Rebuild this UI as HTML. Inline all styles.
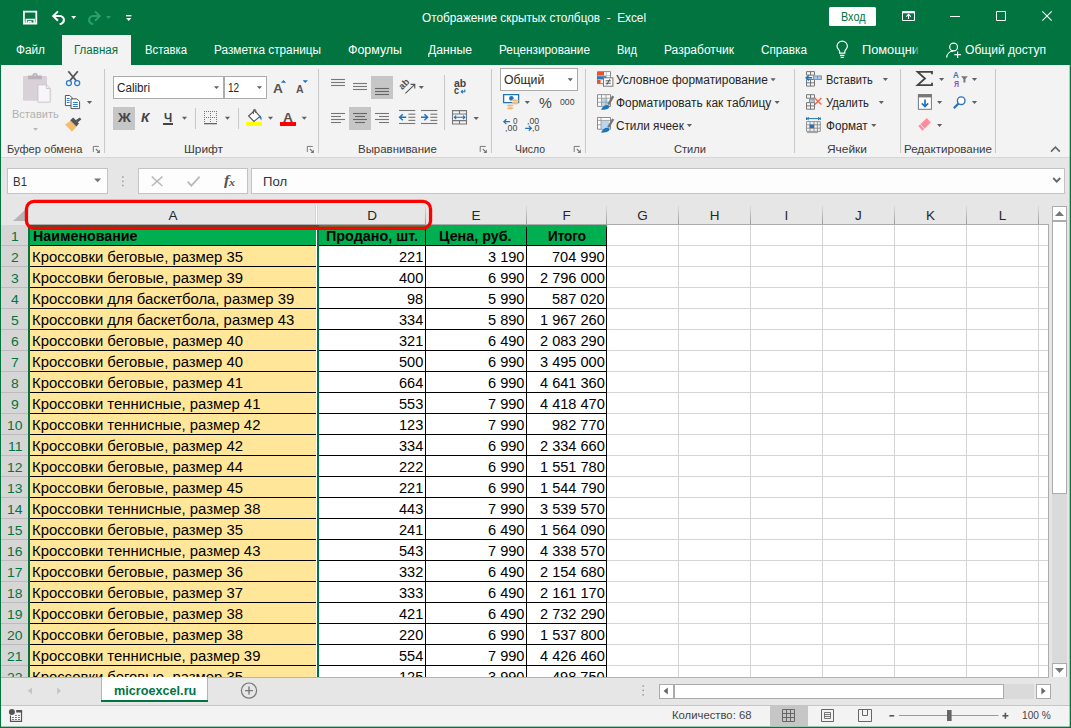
<!DOCTYPE html>
<html><head><meta charset="utf-8"><title>Excel</title>
<style>
html,body{margin:0;padding:0;}
body{width:1071px;height:728px;overflow:hidden;position:relative;background:#e6e6e6;font-family:"Liberation Sans",sans-serif;}
.r{position:absolute;box-sizing:border-box;display:block;}
.t{position:absolute;white-space:pre;line-height:1;transform-origin:0 50%;font-family:"Liberation Sans",sans-serif;}
</style></head><body>
<div class="r" style="left:0px;top:0px;width:1071px;height:65px;background:#01743f;"></div>
<div class="r" style="left:0px;top:65px;width:1071px;height:92px;background:#f3f3f3;"></div>
<div class="r" style="left:0px;top:157px;width:1071px;height:1px;background:#d6d6d6;"></div>
<div class="r" style="left:0px;top:158px;width:1071px;height:46px;background:#e6e6e6;"></div>
<div class="r" style="left:62px;top:35px;width:69px;height:30px;background:#f3f3f3;"></div>
<span class="t" style="left:422.00px;top:11px;line-height:14px;font-size:12px;color:#fff;transform:scaleX(0.9836);">Отображение скрытых столбцов  -  Excel</span>
<div class="r" style="left:829px;top:7px;width:47px;height:19px;background:#fff;border-radius:1.5px;"></div>
<span class="t" style="left:840.50px;top:10px;line-height:14px;font-size:12px;color:#01743f;transform:scaleX(0.9025);">Вход</span>
<span class="t" style="left:16.00px;top:43px;line-height:14px;font-size:12px;color:#fff;transform:scaleX(0.9830);">Файл</span>
<span class="t" style="left:145.00px;top:43px;line-height:14px;font-size:12px;color:#fff;transform:scaleX(0.9417);">Вставка</span>
<span class="t" style="left:214.00px;top:43px;line-height:14px;font-size:12px;color:#fff;transform:scaleX(0.9829);">Разметка страницы</span>
<span class="t" style="left:348.00px;top:43px;line-height:14px;font-size:12px;color:#fff;transform:scaleX(1.0341);">Формулы</span>
<span class="t" style="left:428.00px;top:43px;line-height:14px;font-size:12px;color:#fff;transform:scaleX(1.0149);">Данные</span>
<span class="t" style="left:499.00px;top:43px;line-height:14px;font-size:12px;color:#fff;transform:scaleX(0.9821);">Рецензирование</span>
<span class="t" style="left:617.00px;top:43px;line-height:14px;font-size:12px;color:#fff;transform:scaleX(0.9212);">Вид</span>
<span class="t" style="left:664.00px;top:43px;line-height:14px;font-size:12px;color:#fff;transform:scaleX(1.0003);">Разработчик</span>
<span class="t" style="left:761.00px;top:43px;line-height:14px;font-size:12px;color:#fff;transform:scaleX(0.9772);">Справка</span>
<span class="t" style="left:862.00px;top:43px;line-height:14px;font-size:12px;color:#fff;transform:scaleX(1.0669);">Помощни</span>
<span class="t" style="left:965.00px;top:43px;line-height:14px;font-size:12px;color:#fff;transform:scaleX(1.0047);">Общий доступ</span>
<span class="t" style="left:74.00px;top:43px;line-height:14px;font-size:12px;color:#01743f;transform:scaleX(0.9633);">Главная</span>
<div class="r" style="left:913px;top:42px;width:8px;height:16px;background:linear-gradient(90deg,rgba(1,116,63,0),#01743f 85%)"></div>
<svg class="r" style="left:0px;top:0px" width="140" height="34" viewBox="0 0 140 34">
<g fill="none" stroke="#fff" stroke-width="1.8">
<path d="M23.9 11.6H36.3V23.5H23.9Z"/>
<path d="M26.2 23.6V19.5H34.2V23.6" stroke-width="1.4"/>
<path d="M28.3 23.6V21.6H30.9V23.6" stroke-width="1.2"/>
</g>
<g fill="none" stroke="#fff" stroke-width="2" stroke-linecap="butt" stroke-linejoin="miter">
<path d="M58 11.4L53.2 16.1L58 20.8"/>
<path d="M53.6 16.1H61a4 4 0 0 1 0.3 7.6L59.6 24"/>
</g>
<path d="M71.2 16H76.2L73.7 19Z" fill="#fff"/>
<g fill="none" stroke="#27a070" stroke-width="2">
<path d="M95 11.4L99.8 16.1L95 20.8"/>
<path d="M99.4 16.1H92a4 4 0 0 0 -0.3 7.6L93.4 24"/>
</g>
<path d="M106 16H111L108.5 19Z" fill="#27a070"/>
<path d="M126 15H131.4V16.4H126Z" fill="#fff"/>
<path d="M126 18H131.4L128.7 21Z" fill="#fff"/>
</svg>
<svg class="r" style="left:895px;top:0px" width="170" height="34" viewBox="895 0 170 34">
<g fill="none" stroke="#fff" stroke-width="1">
<path d="M902.5 11.5H914.5V20.5H902.5Z"/>
<path d="M902.5 12.5H914.5" stroke-width="1.6"/>
<path d="M908.5 19V14.6M906.2 16.6L908.5 14.3L910.8 16.6" stroke-width="1.1"/>
<path d="M950 16.5H960"/>
<path d="M996.5 11.5H1005.5V20.5H996.5Z"/>
<path d="M1042.3 11.3L1051.7 20.7M1051.7 11.3L1042.3 20.7" stroke-width="1.1"/>
</g>
</svg>
<svg class="r" style="left:830px;top:36px" width="24" height="26" viewBox="830 36 24 26"><g fill="none" stroke="#fff" stroke-width="1.2">
<path d="M839.6 53.2V51.6C839.6 49.8 837 48.8 837 46.3a5.2 5.2 0 0 1 10.4 0C847.4 48.8 844.8 49.8 844.8 51.6V53.2Z"/>
<path d="M840 55.3H844.4M840.6 57.3H843.8"/>
</g></svg>
<svg class="r" style="left:940px;top:36px" width="26" height="26" viewBox="940 36 26 26"><g fill="none" stroke="#fff" stroke-width="1.2">
<circle cx="953.6" cy="47" r="3.9"/>
<path d="M946.6 57.6C947 53.4 950 51.2 953.2 51.2"/>
<path d="M957.6 51.4V58M954.3 54.7H960.9"/>
</g></svg>
<div class="r" style="left:104px;top:69px;width:1px;height:84px;background:#c8c8c8;"></div>
<div class="r" style="left:318px;top:69px;width:1px;height:84px;background:#c8c8c8;"></div>
<div class="r" style="left:491px;top:69px;width:1px;height:84px;background:#c8c8c8;"></div>
<div class="r" style="left:585px;top:69px;width:1px;height:84px;background:#c8c8c8;"></div>
<div class="r" style="left:794px;top:69px;width:1px;height:84px;background:#c8c8c8;"></div>
<div class="r" style="left:900px;top:69px;width:1px;height:84px;background:#c8c8c8;"></div>
<div class="r" style="left:995px;top:69px;width:1px;height:84px;background:#c8c8c8;"></div>
<div class="r" style="left:444px;top:75px;width:1px;height:55px;background:#c8c8c8;"></div>
<div class="r" style="left:195px;top:108px;width:1px;height:21px;background:#c8c8c8;"></div>
<div class="r" style="left:238px;top:108px;width:1px;height:21px;background:#c8c8c8;"></div>
<span class="t" style="left:6.80px;top:143px;line-height:12px;font-size:11.5px;color:#3b3b3b;transform:scaleX(0.9649);">Буфер обмена</span>
<span class="t" style="left:184.00px;top:143px;line-height:12px;font-size:11.5px;color:#3b3b3b;transform:scaleX(1.0308);">Шрифт</span>
<span class="t" style="left:357.60px;top:143px;line-height:12px;font-size:11.5px;color:#3b3b3b;transform:scaleX(0.9955);">Выравнивание</span>
<span class="t" style="left:514.90px;top:143px;line-height:12px;font-size:11.5px;color:#3b3b3b;transform:scaleX(0.9101);">Число</span>
<span class="t" style="left:674.00px;top:143px;line-height:12px;font-size:11.5px;color:#3b3b3b;transform:scaleX(0.9659);">Стили</span>
<span class="t" style="left:827.00px;top:143px;line-height:12px;font-size:11.5px;color:#3b3b3b;transform:scaleX(1.0370);">Ячейки</span>
<span class="t" style="left:904.00px;top:143px;line-height:12px;font-size:11.5px;color:#3b3b3b;transform:scaleX(1.0045);">Редактирование</span>
<div class="r" style="left:113px;top:107px;width:22px;height:23px;background:#c6c6c6;"></div>
<div class="r" style="left:371px;top:76px;width:22px;height:23px;background:#c6c6c6;"></div>
<div class="r" style="left:349px;top:107px;width:22px;height:23px;background:#c6c6c6;"></div>
<div class="r" style="left:113px;top:76px;width:111px;height:23px;background:#fff;border:1px solid #ababab;"></div>
<div class="r" style="left:224px;top:76px;width:43px;height:23px;background:#fff;border:1px solid #ababab;"></div>
<div class="r" style="left:500px;top:68px;width:78px;height:23px;background:#fff;border:1px solid #ababab;"></div>
<span class="t" style="left:116.60px;top:81px;line-height:14px;font-size:12px;color:#262626;transform:scaleX(0.9733);">Calibri</span>
<span class="t" style="left:228.00px;top:81px;line-height:14px;font-size:12px;color:#262626;transform:scaleX(0.8391);">12</span>
<span class="t" style="left:503.70px;top:73px;line-height:14px;font-size:12px;color:#262626;transform:scaleX(1.0181);">Общий</span>
<span class="t" style="left:11.90px;top:108px;line-height:12px;font-size:11.5px;color:#b1b1b1;transform:scaleX(0.9580);">Вставить</span>
<span class="t" style="left:117.90px;top:111px;line-height:14px;font-size:12.5px;color:#444;transform:scaleX(1.1330);font-weight:700;">Ж</span>
<span class="t" style="left:141.00px;top:111px;line-height:14px;font-size:12.5px;color:#444;transform:scaleX(1.0931);font-weight:700;font-style:italic;">К</span>
<span class="t" style="left:163.60px;top:111px;line-height:14px;font-size:12.5px;color:#444;transform:scaleX(0.9336);font-weight:700;">Ч</span>
<div class="r" style="left:163px;top:123px;width:10px;height:1.5px;background:#444;"></div>
<span class="t" style="left:273.30px;top:81px;line-height:15px;font-size:13.5px;color:#555;transform:scaleX(1.0154);font-weight:700;">A</span>
<span class="t" style="left:296.30px;top:83px;line-height:12px;font-size:10.5px;color:#555;transform:scaleX(1.0022);font-weight:700;">A</span>
<span class="t" style="left:283.40px;top:110px;line-height:15px;font-size:13px;color:#555;transform:scaleX(1.0545);font-weight:700;">A</span>
<div class="r" style="left:246px;top:122px;width:16px;height:4px;background:#ffff00;"></div>
<div class="r" style="left:280px;top:122px;width:16px;height:4px;background:#ff0000;"></div>
<span class="t" style="left:539.20px;top:95px;line-height:16px;font-size:14.5px;color:#444;transform:scaleX(0.9928);">%</span>
<span class="t" style="left:559.70px;top:96px;line-height:11px;font-size:9.7px;color:#444;transform:scaleX(0.8959);">000</span>
<span class="t" style="left:616.20px;top:73px;line-height:14px;font-size:12px;color:#262626;transform:scaleX(0.9943);">Условное форматирование</span>
<span class="t" style="left:616.20px;top:96px;line-height:14px;font-size:12px;color:#262626;transform:scaleX(0.9947);">Форматировать как таблицу</span>
<span class="t" style="left:616.20px;top:119px;line-height:14px;font-size:12px;color:#262626;transform:scaleX(0.9790);">Стили ячеек</span>
<span class="t" style="left:825.80px;top:73px;line-height:14px;font-size:12px;color:#262626;transform:scaleX(0.9181);">Вставить</span>
<span class="t" style="left:825.80px;top:96px;line-height:14px;font-size:12px;color:#262626;transform:scaleX(0.9364);">Удалить</span>
<span class="t" style="left:825.80px;top:119px;line-height:14px;font-size:12px;color:#262626;transform:scaleX(0.9759);">Формат</span>
<span class="t" style="left:453.70px;top:77px;line-height:12px;font-size:10.5px;color:#444;transform:scaleX(0.9956);font-weight:700;">ab</span>
<span class="t" style="left:454.00px;top:84px;line-height:12px;font-size:10.5px;color:#444;transform:scaleX(0.8562);font-weight:700;">c</span>
<span class="t" style="left:512.50px;top:116px;line-height:10px;font-size:8.8px;color:#444;transform:scaleX(0.9194);">0</span>
<span class="t" style="left:504.70px;top:123px;line-height:10px;font-size:8.8px;color:#444;transform:scaleX(1.0054);">,00</span>
<span class="t" style="left:527.10px;top:116px;line-height:10px;font-size:8.8px;color:#444;transform:scaleX(0.9891);">,00</span>
<span class="t" style="left:531.70px;top:123px;line-height:10px;font-size:8.8px;color:#444;transform:scaleX(1.0219);">,0</span>
<span class="t" style="left:953.20px;top:69.5px;line-height:10px;font-size:8.8px;color:#2e75b6;transform:scaleX(0.9126);font-weight:700;">A</span>
<span class="t" style="left:953.50px;top:78.5px;line-height:10px;font-size:8.4px;color:#9b4fb5;transform:scaleX(0.8282);font-weight:700;">Я</span>
<svg class="r" style="left:0;top:65px" width="1071" height="92" viewBox="0 65 1071 92"><path d="M86.9 101h5.2l-2.6 2.9z" fill="#606060"/><path d="M181.9 116.8h5.2l-2.6 2.9z" fill="#606060"/><path d="M213.9 86.2h5.2l-2.6 2.9z" fill="#606060"/><path d="M256.9 86.2h5.2l-2.6 2.9z" fill="#606060"/><path d="M224.9 116.8h5.2l-2.6 2.9z" fill="#606060"/><path d="M267.9 116.8h5.2l-2.6 2.9z" fill="#606060"/><path d="M301.7 116.8h5.2l-2.6 2.9z" fill="#606060"/><path d="M418.7 86h5.2l-2.6 2.9z" fill="#606060"/><path d="M473.6 117.1h5.2l-2.6 2.9z" fill="#606060"/><path d="M567.7 78.3h5.2l-2.6 2.9z" fill="#606060"/><path d="M524.7 101.1h5.2l-2.6 2.9z" fill="#606060"/><path d="M770.5 78.3h5.2l-2.6 2.9z" fill="#606060"/><path d="M774.5 101.1h5.2l-2.6 2.9z" fill="#606060"/><path d="M686.8 124h5.2l-2.6 2.9z" fill="#606060"/><path d="M882.8 78.1h5.2l-2.6 2.9z" fill="#606060"/><path d="M878.7 101.1h5.2l-2.6 2.9z" fill="#606060"/><path d="M871.2 124h5.2l-2.6 2.9z" fill="#606060"/><path d="M939 78.1h5.2l-2.6 2.9z" fill="#606060"/><path d="M971.9 78.1h5.2l-2.6 2.9z" fill="#606060"/><path d="M937 101.1h5.2l-2.6 2.9z" fill="#606060"/><path d="M971.9 101.1h5.2l-2.6 2.9z" fill="#606060"/><path d="M937 124h5.2l-2.6 2.9z" fill="#606060"/><path d="M33 128h5l-2.5 2.8z" fill="#b8b8b8"/><path d="M93.3 151.9V146.4H98.8" fill="none" stroke="#777" stroke-width="1"/><path d="M95.89999999999999 149.0L99.3 152.4" stroke="#777" stroke-width="1.1"/><path d="M96.5 153.0H99.89999999999999V149.6Z" fill="#777"/><path d="M307.3 151.9V146.4H312.8" fill="none" stroke="#777" stroke-width="1"/><path d="M309.90000000000003 149.0L313.3 152.4" stroke="#777" stroke-width="1.1"/><path d="M310.5 153.0H313.90000000000003V149.6Z" fill="#777"/><path d="M480.2 151.9V146.4H485.7" fill="none" stroke="#777" stroke-width="1"/><path d="M482.8 149.0L486.2 152.4" stroke="#777" stroke-width="1.1"/><path d="M483.4 153.0H486.8V149.6Z" fill="#777"/><path d="M574.2 151.9V146.4H579.7" fill="none" stroke="#777" stroke-width="1"/><path d="M576.8000000000001 149.0L580.2 152.4" stroke="#777" stroke-width="1.1"/><path d="M577.4000000000001 153.0H580.8000000000001V149.6Z" fill="#777"/><path d="M1051 151.6L1055.4 147.2L1059.8 151.6" fill="none" stroke="#666" stroke-width="1.6"/><rect x="23" y="76" width="24" height="24.7" rx="1" fill="#d8d2d8"/><path d="M28 79.3V75.6H32.4a2.7 2.7 0 0 1 5.4 0H41.8V79.3Z" fill="#b9b1b9"/><circle cx="35.1" cy="75.3" r="1" fill="#d8d2d8"/><path d="M37.9 84.8H46.6L50.2 88.4V102.2H37.9Z" fill="#f8f5f8" stroke="#cbc4cb" stroke-width="1"/><path d="M46.4 84.8V88.6H50.2" fill="none" stroke="#cbc4cb" stroke-width="1"/><path d="M68.3 71.2L76.4 81M77.8 71.2L69.7 81" stroke="#555" stroke-width="1.8" fill="none"/><circle cx="68.9" cy="83.1" r="2.5" fill="none" stroke="#2e7cc4" stroke-width="1.3"/><circle cx="77.2" cy="83.1" r="2.5" fill="none" stroke="#2e7cc4" stroke-width="1.3"/><path d="M65.4 95.5H69.8L72.2 97.9V105.6H65.4Z" fill="#fff" stroke="#555" stroke-width="1"/><path d="M71 98.9H76.8L79.6 101.7V108.6H71Z" fill="#fff" stroke="#555" stroke-width="1"/><path d="M66.8 98.5H69.6" stroke="#2e7cc4" stroke-width="1"/><path d="M66.8 100.5H69.6" stroke="#2e7cc4" stroke-width="1"/><path d="M66.8 102.5H69.6" stroke="#2e7cc4" stroke-width="1"/><path d="M72.8 102.5H77.8" stroke="#2e7cc4" stroke-width="1"/><path d="M72.8 104.5H77.8" stroke="#2e7cc4" stroke-width="1"/><path d="M72.8 106.5H77.8" stroke="#2e7cc4" stroke-width="1"/><path d="M65 124.6L71 120.6L76.6 126.4L72 131.8Z" fill="#f5bc6c"/><path d="M70.2 120.2L73.2 117.6L79 123.6L76.4 126.4Z" fill="#555"/><path d="M75.6 120.2L79.8 117.4L81.4 119.2L77.6 122.4Z" fill="#555"/><path d="M280.9 82.7L283.5 80L286.1 82.7Z" fill="#1e74bd"/><path d="M302.6 80.2H308L305.3 82.9Z" fill="#1e74bd"/><rect x="204" y="111" width="1" height="1" fill="#777"/><rect x="206" y="111" width="1" height="1" fill="#777"/><rect x="208" y="111" width="1" height="1" fill="#777"/><rect x="210" y="111" width="1" height="1" fill="#777"/><rect x="212" y="111" width="1" height="1" fill="#777"/><rect x="214" y="111" width="1" height="1" fill="#777"/><rect x="216" y="111" width="1" height="1" fill="#777"/><rect x="204" y="117" width="1" height="1" fill="#777"/><rect x="206" y="117" width="1" height="1" fill="#777"/><rect x="208" y="117" width="1" height="1" fill="#777"/><rect x="210" y="117" width="1" height="1" fill="#777"/><rect x="212" y="117" width="1" height="1" fill="#777"/><rect x="214" y="117" width="1" height="1" fill="#777"/><rect x="216" y="117" width="1" height="1" fill="#777"/><rect x="204" y="111" width="1" height="1" fill="#777"/><rect x="204" y="113" width="1" height="1" fill="#777"/><rect x="204" y="115" width="1" height="1" fill="#777"/><rect x="204" y="117" width="1" height="1" fill="#777"/><rect x="204" y="119" width="1" height="1" fill="#777"/><rect x="204" y="121" width="1" height="1" fill="#777"/><rect x="210" y="111" width="1" height="1" fill="#777"/><rect x="210" y="113" width="1" height="1" fill="#777"/><rect x="210" y="115" width="1" height="1" fill="#777"/><rect x="210" y="117" width="1" height="1" fill="#777"/><rect x="210" y="119" width="1" height="1" fill="#777"/><rect x="210" y="121" width="1" height="1" fill="#777"/><rect x="216" y="111" width="1" height="1" fill="#777"/><rect x="216" y="113" width="1" height="1" fill="#777"/><rect x="216" y="115" width="1" height="1" fill="#777"/><rect x="216" y="117" width="1" height="1" fill="#777"/><rect x="216" y="119" width="1" height="1" fill="#777"/><rect x="216" y="121" width="1" height="1" fill="#777"/><rect x="204" y="123" width="13" height="1.3" fill="#666"/><path d="M248.6 116L254.6 110.6L260 116.4L254 121.4Z" fill="#fff" stroke="#555" stroke-width="1.1"/><path d="M253.4 114V110.6a1.2 1.2 0 0 1 2.4 0V113" fill="none" stroke="#555" stroke-width="1"/><path d="M259.6 115C261.6 116.4 262.2 118.6 261.2 120.6C260.6 118.8 259.8 117.8 258.6 117Z" fill="#2e7cc4"/><path d="M331 79.5H345" stroke="#777" stroke-width="1.1"/><path d="M331 82.5H345" stroke="#777" stroke-width="1.1"/><path d="M331 85.5H345" stroke="#777" stroke-width="1.1"/><path d="M353 83.5H367" stroke="#777" stroke-width="1.1"/><path d="M353 86.5H367" stroke="#777" stroke-width="1.1"/><path d="M353 89.5H367" stroke="#777" stroke-width="1.1"/><path d="M375 88.5H389" stroke="#666" stroke-width="1.1"/><path d="M375 91.5H389" stroke="#666" stroke-width="1.1"/><path d="M375 94.5H389" stroke="#666" stroke-width="1.1"/><path d="M331 113.5H345" stroke="#777" stroke-width="1.1"/><path d="M353 113.5H367" stroke="#666" stroke-width="1.1"/><path d="M375 113.5H389" stroke="#777" stroke-width="1.1"/><path d="M331 116.5H341" stroke="#777" stroke-width="1.1"/><path d="M355 116.5H365" stroke="#666" stroke-width="1.1"/><path d="M379 116.5H389" stroke="#777" stroke-width="1.1"/><path d="M331 119.5H345" stroke="#777" stroke-width="1.1"/><path d="M353 119.5H367" stroke="#666" stroke-width="1.1"/><path d="M375 119.5H389" stroke="#777" stroke-width="1.1"/><path d="M331 122.5H341" stroke="#777" stroke-width="1.1"/><path d="M355 122.5H365" stroke="#666" stroke-width="1.1"/><path d="M379 122.5H389" stroke="#777" stroke-width="1.1"/><path d="M405.4 93.4L414.6 84.6M410.6 84.4H414.8V88.6" fill="none" stroke="#555" stroke-width="1.1"/><text x="0" y="0" transform="translate(402.2 90.2) rotate(-45)" font-family="Liberation Sans, sans-serif" font-size="9.5" font-weight="700" fill="#555">ab</text><path d="M399 110.5H415.3" stroke="#777" stroke-width="1.1"/><path d="M399 123.5H415.3" stroke="#777" stroke-width="1.1"/><path d="M408.4 114.2H415.3" stroke="#777" stroke-width="1.1"/><path d="M408.4 117.3H415.3" stroke="#777" stroke-width="1.1"/><path d="M408.4 120.4H415.3" stroke="#777" stroke-width="1.1"/><path d="M421 110.5H437.3" stroke="#777" stroke-width="1.1"/><path d="M421 123.5H437.3" stroke="#777" stroke-width="1.1"/><path d="M430.4 114.2H437.3" stroke="#777" stroke-width="1.1"/><path d="M430.4 117.3H437.3" stroke="#777" stroke-width="1.1"/><path d="M430.4 120.4H437.3" stroke="#777" stroke-width="1.1"/><path d="M406.2 117.3H399.8M402.8 114.3L399.6 117.3L402.8 120.3" fill="none" stroke="#1e74bd" stroke-width="1.5"/><path d="M421 117.3H427.4M424.4 114.3L427.6 117.3L424.4 120.3" fill="none" stroke="#1e74bd" stroke-width="1.5"/><path d="M464.8 89.6V91.8H461.4M462.8 90.2L461.2 91.8L462.8 93.4" fill="none" stroke="#1e74bd" stroke-width="1.1"/><path d="M452.5 110.6H466.5V124H452.5ZM452.5 114H466.5M452.5 120.6H466.5M459.5 110.6V114M459.5 120.6V124" fill="none" stroke="#777" stroke-width="1.1"/><path d="M454.4 117.3H464.8M456.2 115.6L454.3 117.3L456.2 119M463 115.6L464.9 117.3L463 119" fill="none" stroke="#1e74bd" stroke-width="1.1"/><path d="M503.6 94.6H518.6V102.6H503.6Z" fill="#fff" stroke="#1e74bd" stroke-width="1.3"/><circle cx="511.4" cy="98.4" r="2.3" fill="#1e74bd"/><ellipse cx="515.2" cy="100.6" rx="3.3" ry="1.3" fill="#f7b26b" stroke="#f3f3f3" stroke-width="0.5"/><ellipse cx="515.2" cy="103.2" rx="3.3" ry="1.3" fill="#f7b26b" stroke="#f3f3f3" stroke-width="0.5"/><ellipse cx="510.2" cy="105.6" rx="3.3" ry="1.3" fill="#f7b26b" stroke="#f3f3f3" stroke-width="0.5"/><ellipse cx="510.2" cy="108.2" rx="3.3" ry="1.3" fill="#f7b26b" stroke="#f3f3f3" stroke-width="0.5"/><path d="M510 121.7H503.8M506.4 119.3L503.8 121.7L506.4 124.1" fill="none" stroke="#1e74bd" stroke-width="1.2"/><path d="M525.2 128.3H531.4M528.8 125.9L531.4 128.3L528.8 130.7" fill="none" stroke="#1e74bd" stroke-width="1.2"/><path d="M597.5 71.6H610.5V83.6H597.5Z" fill="#fff" stroke="#8a8a8a" stroke-width="1"/><path d="M597.5 75.6H610.5M597.5 79.6H610.5M606.4 71.6V83.6" stroke="#b5b5b5" stroke-width="0.8" fill="none"/><rect x="597" y="72" width="7" height="3.4" fill="#f04e23"/><rect x="597" y="76.2" width="9" height="3" fill="#2e75b6"/><rect x="597" y="80" width="3.6" height="3.4" fill="#f04e23"/><rect x="603.5" y="77.8" width="9.4" height="8.4" fill="#fff" stroke="#777" stroke-width="1"/><path d="M605.6 80.8H610.8M605.6 83.2H610.8M609.8 79.2L606.8 84.8" stroke="#444" stroke-width="0.9" fill="none"/><path d="M597.5 94.7H610.5V106.4H597.5Z" fill="#fff" stroke="#8a8a8a" stroke-width="1"/><rect x="601" y="98.2" width="6.6" height="8" fill="#b9d7f0"/><path d="M597.5 98.2H610.5M597.5 102.2H610.5M601.5 94.7V106.2M606 94.7V106.2" stroke="#9a9a9a" stroke-width="0.9" fill="none"/><path d="M613.2 96.2L608.2 104.60000000000001" stroke="#777" stroke-width="2.4"/><path d="M601 109.8C603 105.2 607 103.8 609.4 105.8C610 108.60000000000001 606 110.2 601 109.8Z" fill="#1e74bd"/><path d="M597.5 117.5H610.5V129.2H597.5Z" fill="#fff" stroke="#8a8a8a" stroke-width="1"/><rect x="601" y="120.6" width="8" height="8.4" fill="#b9d7f0"/><path d="M597.5 120.4H610.5M601 117.5V129M597.5 124.8H601" stroke="#9a9a9a" stroke-width="0.9" fill="none"/><path d="M613.2 119L608.2 127.4" stroke="#777" stroke-width="2.4"/><path d="M601 132.6C603 128 607 126.6 609.4 128.6C610 131.4 606 133 601 132.6Z" fill="#1e74bd"/><path d="M806.5 71.6H814.5V75.1H806.5ZM810.5 71.6V75.1" fill="none" stroke="#777" stroke-width="1"/><path d="M806.5 79.5H814.5V86.1H806.5ZM806.5 82.8H814.5M810.5 79.5V86.1" fill="none" stroke="#777" stroke-width="1"/><rect x="813.6" y="75.9" width="7.8" height="3.6" fill="#a6cbec" stroke="#888" stroke-width="0.9"/><path d="M817.5 75.9V79.5" stroke="#888" stroke-width="0.8"/><path d="M812.2 77.8H806.4M809 75.2L806.2 77.8L809 80.4" fill="none" stroke="#1e74bd" stroke-width="1.5"/><path d="M806.5 94.7H814.5V98.2H806.5ZM810.5 94.7V98.2" fill="none" stroke="#777" stroke-width="1"/><path d="M806.5 102.60000000000001H814.5V109.2H806.5ZM806.5 105.9H814.5M810.5 102.60000000000001V109.2" fill="none" stroke="#777" stroke-width="1"/><rect x="809.6" y="99.2" width="4.6" height="3.4" fill="#a6cbec" stroke="#888" stroke-width="0.9"/><path d="M814.8 98L821.4 104.4M821.4 98L814.8 104.4" stroke="#f4664a" stroke-width="1.4" fill="none"/><path d="M806.5 117.3V120M820.3 117.3V120M807 118.6H820M808.8 117.2L807 118.6L808.8 120M818 117.2L819.8 118.6L818 120" fill="none" stroke="#1e74bd" stroke-width="1"/><path d="M806.5 121.6H820.3V131.4H806.5ZM806.5 124.8H820.3M806.5 128.2H820.3M810 121.6V131.4M814 121.6V131.4M817.4 121.6V131.4" fill="none" stroke="#8a8a8a" stroke-width="0.9"/><rect x="809.6" y="124.6" width="4.4" height="3.6" fill="#1e74bd"/><path d="M807 132.6H818" stroke="#8a8a8a" stroke-width="0.8"/><path d="M932 74.2V71.8H917.6L925 78.5L917.6 85.2H932V82.8" fill="none" stroke="#444" stroke-width="1.8"/><path d="M961.1 76.2H967.8L965.4 79V82.6H963.4V79Z" fill="#777"/><rect x="918.4" y="94.7" width="13" height="14.6" fill="#fff" stroke="#777" stroke-width="1"/><rect x="918" y="94.2" width="13.8" height="3.2" fill="#777"/><path d="M925 99.4V106.4M921.8 103.4L925 106.6L928.2 103.4" fill="none" stroke="#1e74bd" stroke-width="1.7"/><circle cx="961.2" cy="100.7" r="3.8" fill="#fff" stroke="#2e75b6" stroke-width="1.4"/><path d="M958.4 103.6L953.8 108.2" stroke="#2e75b6" stroke-width="2.2"/><path d="M918.3 126L926.8 117.9L930.8 122.6L922.4 130.7Z" fill="#ff8c9e"/><path d="M920.2 124.2L924.4 128.8" stroke="#f3f3f3" stroke-width="0.9"/></svg>
<div class="r" style="left:7px;top:168px;width:101px;height:26px;background:#fdfdfd;border:1px solid #c3c3c3;"></div>
<span class="t" style="left:13.00px;top:175px;line-height:14px;font-size:12px;color:#333;transform:scaleX(0.9538);">B1</span>
<div class="r" style="left:138px;top:168px;width:110px;height:26px;background:#fdfdfd;border:1px solid #c3c3c3;"></div>
<div class="r" style="left:251px;top:168px;width:814px;height:26px;background:#fdfdfd;border:1px solid #c3c3c3;"></div>
<span class="t" style="left:263.40px;top:175px;line-height:14px;font-size:12px;color:#333;transform:scaleX(1.0936);">Пол</span>
<svg class="r" style="left:0;top:160px" width="1071" height="44" viewBox="0 160 1071 44"><path d="M94 178.6H101.2L97.6 182.3Z" fill="#777"/><rect x="122" y="176.2" width="1.6" height="1.6" fill="#a3a3a3"/><rect x="122" y="180.5" width="1.6" height="1.6" fill="#a3a3a3"/><rect x="122" y="184.7" width="1.6" height="1.6" fill="#a3a3a3"/><path d="M151.8 176.6L162.4 186M162.4 176.6L151.8 186" stroke="#b9b9b9" stroke-width="1.5" fill="none"/><path d="M187.6 181.6L191.4 185.6L199.6 176.6" stroke="#b9b9b9" stroke-width="1.8" fill="none"/><path d="M1053.2 178L1056.7 181.6L1060.2 178" stroke="#666" stroke-width="1.8" fill="none"/></svg>
<span class="t" style="left:224.20px;top:172px;line-height:16px;font-size:15px;color:#555;transform:scaleX(1.0809);font-weight:700;font-style:italic;font-family:'Liberation Serif',serif;">f</span>
<span class="t" style="left:229.20px;top:177px;line-height:11px;font-size:10.5px;color:#555;transform:scaleX(1.1429);font-weight:700;font-style:italic;font-family:'Liberation Serif',serif;">x</span>
<div class="r" style="left:1px;top:204px;width:1048px;height:473px;background:#fff;"></div>
<div class="r" style="left:1px;top:204px;width:1048px;height:21px;background:#e6e6e6;"></div>
<div class="r" style="left:29px;top:224px;width:1020px;height:1px;background:#ababab;"></div>
<div class="r" style="left:1px;top:225px;width:27px;height:452px;background:#d6d6d6;"></div>
<div class="r" style="left:30px;top:225px;width:286px;height:21px;background:#00b050;"></div>
<div class="r" style="left:319px;top:225px;width:288px;height:21px;background:#00b050;"></div>
<div class="r" style="left:30px;top:246px;width:286px;height:431px;background:#ffe699;"></div>
<div class="r" style="left:678px;top:225px;width:1px;height:452px;background:#d4d4d4;"></div>
<div class="r" style="left:750px;top:225px;width:1px;height:452px;background:#d4d4d4;"></div>
<div class="r" style="left:822px;top:225px;width:1px;height:452px;background:#d4d4d4;"></div>
<div class="r" style="left:894px;top:225px;width:1px;height:452px;background:#d4d4d4;"></div>
<div class="r" style="left:966px;top:225px;width:1px;height:452px;background:#d4d4d4;"></div>
<div class="r" style="left:1038px;top:225px;width:1px;height:452px;background:#d4d4d4;"></div>
<div class="r" style="left:607px;top:245px;width:441px;height:1px;background:#d4d4d4;"></div>
<div class="r" style="left:30px;top:245px;width:577px;height:1px;background:#000;"></div>
<div class="r" style="left:1px;top:245px;width:27px;height:1px;background:#bcbcbc;"></div>
<div class="r" style="left:607px;top:266px;width:441px;height:1px;background:#d4d4d4;"></div>
<div class="r" style="left:30px;top:266px;width:577px;height:1px;background:#000;"></div>
<div class="r" style="left:1px;top:266px;width:27px;height:1px;background:#bcbcbc;"></div>
<div class="r" style="left:607px;top:287px;width:441px;height:1px;background:#d4d4d4;"></div>
<div class="r" style="left:30px;top:287px;width:577px;height:1px;background:#000;"></div>
<div class="r" style="left:1px;top:287px;width:27px;height:1px;background:#bcbcbc;"></div>
<div class="r" style="left:607px;top:308px;width:441px;height:1px;background:#d4d4d4;"></div>
<div class="r" style="left:30px;top:308px;width:577px;height:1px;background:#000;"></div>
<div class="r" style="left:1px;top:308px;width:27px;height:1px;background:#bcbcbc;"></div>
<div class="r" style="left:607px;top:329px;width:441px;height:1px;background:#d4d4d4;"></div>
<div class="r" style="left:30px;top:329px;width:577px;height:1px;background:#000;"></div>
<div class="r" style="left:1px;top:329px;width:27px;height:1px;background:#bcbcbc;"></div>
<div class="r" style="left:607px;top:350px;width:441px;height:1px;background:#d4d4d4;"></div>
<div class="r" style="left:30px;top:350px;width:577px;height:1px;background:#000;"></div>
<div class="r" style="left:1px;top:350px;width:27px;height:1px;background:#bcbcbc;"></div>
<div class="r" style="left:607px;top:371px;width:441px;height:1px;background:#d4d4d4;"></div>
<div class="r" style="left:30px;top:371px;width:577px;height:1px;background:#000;"></div>
<div class="r" style="left:1px;top:371px;width:27px;height:1px;background:#bcbcbc;"></div>
<div class="r" style="left:607px;top:392px;width:441px;height:1px;background:#d4d4d4;"></div>
<div class="r" style="left:30px;top:392px;width:577px;height:1px;background:#000;"></div>
<div class="r" style="left:1px;top:392px;width:27px;height:1px;background:#bcbcbc;"></div>
<div class="r" style="left:607px;top:413px;width:441px;height:1px;background:#d4d4d4;"></div>
<div class="r" style="left:30px;top:413px;width:577px;height:1px;background:#000;"></div>
<div class="r" style="left:1px;top:413px;width:27px;height:1px;background:#bcbcbc;"></div>
<div class="r" style="left:607px;top:434px;width:441px;height:1px;background:#d4d4d4;"></div>
<div class="r" style="left:30px;top:434px;width:577px;height:1px;background:#000;"></div>
<div class="r" style="left:1px;top:434px;width:27px;height:1px;background:#bcbcbc;"></div>
<div class="r" style="left:607px;top:455px;width:441px;height:1px;background:#d4d4d4;"></div>
<div class="r" style="left:30px;top:455px;width:577px;height:1px;background:#000;"></div>
<div class="r" style="left:1px;top:455px;width:27px;height:1px;background:#bcbcbc;"></div>
<div class="r" style="left:607px;top:476px;width:441px;height:1px;background:#d4d4d4;"></div>
<div class="r" style="left:30px;top:476px;width:577px;height:1px;background:#000;"></div>
<div class="r" style="left:1px;top:476px;width:27px;height:1px;background:#bcbcbc;"></div>
<div class="r" style="left:607px;top:497px;width:441px;height:1px;background:#d4d4d4;"></div>
<div class="r" style="left:30px;top:497px;width:577px;height:1px;background:#000;"></div>
<div class="r" style="left:1px;top:497px;width:27px;height:1px;background:#bcbcbc;"></div>
<div class="r" style="left:607px;top:518px;width:441px;height:1px;background:#d4d4d4;"></div>
<div class="r" style="left:30px;top:518px;width:577px;height:1px;background:#000;"></div>
<div class="r" style="left:1px;top:518px;width:27px;height:1px;background:#bcbcbc;"></div>
<div class="r" style="left:607px;top:539px;width:441px;height:1px;background:#d4d4d4;"></div>
<div class="r" style="left:30px;top:539px;width:577px;height:1px;background:#000;"></div>
<div class="r" style="left:1px;top:539px;width:27px;height:1px;background:#bcbcbc;"></div>
<div class="r" style="left:607px;top:560px;width:441px;height:1px;background:#d4d4d4;"></div>
<div class="r" style="left:30px;top:560px;width:577px;height:1px;background:#000;"></div>
<div class="r" style="left:1px;top:560px;width:27px;height:1px;background:#bcbcbc;"></div>
<div class="r" style="left:607px;top:581px;width:441px;height:1px;background:#d4d4d4;"></div>
<div class="r" style="left:30px;top:581px;width:577px;height:1px;background:#000;"></div>
<div class="r" style="left:1px;top:581px;width:27px;height:1px;background:#bcbcbc;"></div>
<div class="r" style="left:607px;top:602px;width:441px;height:1px;background:#d4d4d4;"></div>
<div class="r" style="left:30px;top:602px;width:577px;height:1px;background:#000;"></div>
<div class="r" style="left:1px;top:602px;width:27px;height:1px;background:#bcbcbc;"></div>
<div class="r" style="left:607px;top:623px;width:441px;height:1px;background:#d4d4d4;"></div>
<div class="r" style="left:30px;top:623px;width:577px;height:1px;background:#000;"></div>
<div class="r" style="left:1px;top:623px;width:27px;height:1px;background:#bcbcbc;"></div>
<div class="r" style="left:607px;top:644px;width:441px;height:1px;background:#d4d4d4;"></div>
<div class="r" style="left:30px;top:644px;width:577px;height:1px;background:#000;"></div>
<div class="r" style="left:1px;top:644px;width:27px;height:1px;background:#bcbcbc;"></div>
<div class="r" style="left:607px;top:665px;width:441px;height:1px;background:#d4d4d4;"></div>
<div class="r" style="left:30px;top:665px;width:577px;height:1px;background:#000;"></div>
<div class="r" style="left:1px;top:665px;width:27px;height:1px;background:#bcbcbc;"></div>
<div class="r" style="left:425px;top:227px;width:1px;height:450px;background:#000;"></div>
<div class="r" style="left:526px;top:227px;width:1px;height:450px;background:#000;"></div>
<div class="r" style="left:606px;top:227px;width:1px;height:450px;background:#000;"></div>
<div class="r" style="left:28px;top:225px;width:2px;height:452px;background:#01743f;"></div>
<div class="r" style="left:316px;top:225px;width:1px;height:452px;background:#fff;"></div>
<div class="r" style="left:317px;top:225px;width:2px;height:452px;background:#01743f;"></div>
<div class="r" style="left:28px;top:225px;width:291px;height:2px;background:#01743f;"></div>
<div class="r" style="left:1048px;top:224px;width:1px;height:454px;background:#ababab;"></div>
<div class="r" style="left:425px;top:205px;width:1px;height:19px;background:linear-gradient(#e0e0e0,#9a9a9a)"></div>
<div class="r" style="left:526px;top:205px;width:1px;height:19px;background:linear-gradient(#e0e0e0,#9a9a9a)"></div>
<div class="r" style="left:606px;top:205px;width:1px;height:19px;background:linear-gradient(#e0e0e0,#9a9a9a)"></div>
<div class="r" style="left:678px;top:205px;width:1px;height:19px;background:linear-gradient(#e0e0e0,#9a9a9a)"></div>
<div class="r" style="left:750px;top:205px;width:1px;height:19px;background:linear-gradient(#e0e0e0,#9a9a9a)"></div>
<div class="r" style="left:822px;top:205px;width:1px;height:19px;background:linear-gradient(#e0e0e0,#9a9a9a)"></div>
<div class="r" style="left:894px;top:205px;width:1px;height:19px;background:linear-gradient(#e0e0e0,#9a9a9a)"></div>
<div class="r" style="left:966px;top:205px;width:1px;height:19px;background:linear-gradient(#e0e0e0,#9a9a9a)"></div>
<div class="r" style="left:1038px;top:205px;width:1px;height:19px;background:linear-gradient(#e0e0e0,#9a9a9a)"></div>
<div class="r" style="left:315px;top:205px;width:3px;height:19px;background:linear-gradient(90deg,#bdbdbd,#fff 45%,#fff 55%,#bdbdbd)"></div>
<svg class="r" style="left:13px;top:210px" width="12" height="11" viewBox="0 0 12 11"><path d="M12 0V11H0Z" fill="#b4b4b4"/></svg>
<span class="t" style="left:168.50px;top:207.5px;line-height:15px;font-size:13.5px;color:#262626;transform:scaleX(1.0000);">A</span>
<span class="t" style="left:367.13px;top:207.5px;line-height:15px;font-size:13.5px;color:#262626;transform:scaleX(1.0000);">D</span>
<span class="t" style="left:471.50px;top:207.5px;line-height:15px;font-size:13.5px;color:#262626;transform:scaleX(1.0000);">E</span>
<span class="t" style="left:562.38px;top:207.5px;line-height:15px;font-size:13.5px;color:#262626;transform:scaleX(1.0000);">F</span>
<span class="t" style="left:637.25px;top:207.5px;line-height:15px;font-size:13.5px;color:#262626;transform:scaleX(1.0000);">G</span>
<span class="t" style="left:709.63px;top:207.5px;line-height:15px;font-size:13.5px;color:#262626;transform:scaleX(1.0000);">H</span>
<span class="t" style="left:784.62px;top:207.5px;line-height:15px;font-size:13.5px;color:#262626;transform:scaleX(1.0000);">I</span>
<span class="t" style="left:855.12px;top:207.5px;line-height:15px;font-size:13.5px;color:#262626;transform:scaleX(1.0000);">J</span>
<span class="t" style="left:926.00px;top:207.5px;line-height:15px;font-size:13.5px;color:#262626;transform:scaleX(1.0000);">K</span>
<span class="t" style="left:998.75px;top:207.5px;line-height:15px;font-size:13.5px;color:#262626;transform:scaleX(1.0000);">L</span>
<div class="r" style="left:0px;top:204px;width:28px;height:473px;overflow:hidden">
<span class="t" style="left:11.13px;top:25px;line-height:15px;font-size:13.5px;color:#01743f;transform:scaleX(1.0300);">1</span>
<span class="t" style="left:11.13px;top:46px;line-height:15px;font-size:13.5px;color:#01743f;transform:scaleX(1.0300);">2</span>
<span class="t" style="left:11.13px;top:67px;line-height:15px;font-size:13.5px;color:#01743f;transform:scaleX(1.0300);">3</span>
<span class="t" style="left:11.13px;top:88px;line-height:15px;font-size:13.5px;color:#01743f;transform:scaleX(1.0300);">4</span>
<span class="t" style="left:11.13px;top:109px;line-height:15px;font-size:13.5px;color:#01743f;transform:scaleX(1.0300);">5</span>
<span class="t" style="left:11.13px;top:130px;line-height:15px;font-size:13.5px;color:#01743f;transform:scaleX(1.0300);">6</span>
<span class="t" style="left:11.13px;top:151px;line-height:15px;font-size:13.5px;color:#01743f;transform:scaleX(1.0300);">7</span>
<span class="t" style="left:11.13px;top:172px;line-height:15px;font-size:13.5px;color:#01743f;transform:scaleX(1.0300);">8</span>
<span class="t" style="left:11.13px;top:193px;line-height:15px;font-size:13.5px;color:#01743f;transform:scaleX(1.0300);">9</span>
<span class="t" style="left:7.27px;top:214px;line-height:15px;font-size:13.5px;color:#01743f;transform:scaleX(1.0300);">10</span>
<span class="t" style="left:7.78px;top:235px;line-height:15px;font-size:13.5px;color:#01743f;transform:scaleX(1.0300);">11</span>
<span class="t" style="left:7.27px;top:256px;line-height:15px;font-size:13.5px;color:#01743f;transform:scaleX(1.0300);">12</span>
<span class="t" style="left:7.27px;top:277px;line-height:15px;font-size:13.5px;color:#01743f;transform:scaleX(1.0300);">13</span>
<span class="t" style="left:7.27px;top:298px;line-height:15px;font-size:13.5px;color:#01743f;transform:scaleX(1.0300);">14</span>
<span class="t" style="left:7.27px;top:319px;line-height:15px;font-size:13.5px;color:#01743f;transform:scaleX(1.0300);">15</span>
<span class="t" style="left:7.27px;top:340px;line-height:15px;font-size:13.5px;color:#01743f;transform:scaleX(1.0300);">16</span>
<span class="t" style="left:7.27px;top:361px;line-height:15px;font-size:13.5px;color:#01743f;transform:scaleX(1.0300);">17</span>
<span class="t" style="left:7.27px;top:382px;line-height:15px;font-size:13.5px;color:#01743f;transform:scaleX(1.0300);">18</span>
<span class="t" style="left:7.27px;top:403px;line-height:15px;font-size:13.5px;color:#01743f;transform:scaleX(1.0300);">19</span>
<span class="t" style="left:7.27px;top:424px;line-height:15px;font-size:13.5px;color:#01743f;transform:scaleX(1.0300);">20</span>
<span class="t" style="left:7.27px;top:445px;line-height:15px;font-size:13.5px;color:#01743f;transform:scaleX(1.0300);">21</span>
<span class="t" style="left:7.27px;top:466px;line-height:15px;font-size:13.5px;color:#01743f;transform:scaleX(1.0300);">22</span>
</div>
<span class="t" style="left:32.50px;top:228px;line-height:16px;font-size:14px;color:#000;transform:scaleX(1.0174);font-weight:700;">Наименование</span>
<span class="t" style="left:325.50px;top:228px;line-height:16px;font-size:14px;color:#000;transform:scaleX(1.0265);font-weight:700;">Продано, шт.</span>
<span class="t" style="left:439.00px;top:228px;line-height:16px;font-size:14px;color:#000;transform:scaleX(1.0226);font-weight:700;">Цена, руб.</span>
<span class="t" style="left:548.00px;top:228px;line-height:16px;font-size:14px;color:#000;transform:scaleX(0.9624);font-weight:700;">Итого</span>
<div class="r" style="left:1px;top:204px;width:1048px;height:473px;overflow:hidden">
<span class="t" style="left:31.00px;top:45px;line-height:16px;font-size:14px;color:#000;transform:scaleX(1.0617);">Кроссовки беговые, размер 35</span>
<span class="t" style="left:398.21px;top:45px;line-height:16px;font-size:14px;color:#000;transform:scaleX(1.0400);">221</span>
<span class="t" style="left:487.06px;top:45px;line-height:16px;font-size:14px;color:#000;transform:scaleX(1.0400);">3 190</span>
<span class="t" style="left:550.87px;top:45px;line-height:16px;font-size:14px;color:#000;transform:scaleX(1.0400);">704 990</span>
<span class="t" style="left:31.00px;top:66px;line-height:16px;font-size:14px;color:#000;transform:scaleX(1.0617);">Кроссовки беговые, размер 39</span>
<span class="t" style="left:398.21px;top:66px;line-height:16px;font-size:14px;color:#000;transform:scaleX(1.0400);">400</span>
<span class="t" style="left:487.06px;top:66px;line-height:16px;font-size:14px;color:#000;transform:scaleX(1.0400);">6 990</span>
<span class="t" style="left:538.73px;top:66px;line-height:16px;font-size:14px;color:#000;transform:scaleX(1.0400);">2 796 000</span>
<span class="t" style="left:31.00px;top:87px;line-height:16px;font-size:14px;color:#000;transform:scaleX(1.0617);">Кроссовки для баскетбола, размер 39</span>
<span class="t" style="left:406.30px;top:87px;line-height:16px;font-size:14px;color:#000;transform:scaleX(1.0400);">98</span>
<span class="t" style="left:487.06px;top:87px;line-height:16px;font-size:14px;color:#000;transform:scaleX(1.0400);">5 990</span>
<span class="t" style="left:550.87px;top:87px;line-height:16px;font-size:14px;color:#000;transform:scaleX(1.0400);">587 020</span>
<span class="t" style="left:31.00px;top:108px;line-height:16px;font-size:14px;color:#000;transform:scaleX(1.0617);">Кроссовки для баскетбола, размер 43</span>
<span class="t" style="left:398.21px;top:108px;line-height:16px;font-size:14px;color:#000;transform:scaleX(1.0400);">334</span>
<span class="t" style="left:487.06px;top:108px;line-height:16px;font-size:14px;color:#000;transform:scaleX(1.0400);">5 890</span>
<span class="t" style="left:538.73px;top:108px;line-height:16px;font-size:14px;color:#000;transform:scaleX(1.0400);">1 967 260</span>
<span class="t" style="left:31.00px;top:129px;line-height:16px;font-size:14px;color:#000;transform:scaleX(1.0617);">Кроссовки беговые, размер 40</span>
<span class="t" style="left:398.21px;top:129px;line-height:16px;font-size:14px;color:#000;transform:scaleX(1.0400);">321</span>
<span class="t" style="left:487.06px;top:129px;line-height:16px;font-size:14px;color:#000;transform:scaleX(1.0400);">6 490</span>
<span class="t" style="left:538.73px;top:129px;line-height:16px;font-size:14px;color:#000;transform:scaleX(1.0400);">2 083 290</span>
<span class="t" style="left:31.00px;top:150px;line-height:16px;font-size:14px;color:#000;transform:scaleX(1.0617);">Кроссовки беговые, размер 40</span>
<span class="t" style="left:398.21px;top:150px;line-height:16px;font-size:14px;color:#000;transform:scaleX(1.0400);">500</span>
<span class="t" style="left:487.06px;top:150px;line-height:16px;font-size:14px;color:#000;transform:scaleX(1.0400);">6 990</span>
<span class="t" style="left:538.73px;top:150px;line-height:16px;font-size:14px;color:#000;transform:scaleX(1.0400);">3 495 000</span>
<span class="t" style="left:31.00px;top:171px;line-height:16px;font-size:14px;color:#000;transform:scaleX(1.0617);">Кроссовки беговые, размер 41</span>
<span class="t" style="left:398.21px;top:171px;line-height:16px;font-size:14px;color:#000;transform:scaleX(1.0400);">664</span>
<span class="t" style="left:487.06px;top:171px;line-height:16px;font-size:14px;color:#000;transform:scaleX(1.0400);">6 990</span>
<span class="t" style="left:538.73px;top:171px;line-height:16px;font-size:14px;color:#000;transform:scaleX(1.0400);">4 641 360</span>
<span class="t" style="left:31.00px;top:192px;line-height:16px;font-size:14px;color:#000;transform:scaleX(1.0617);">Кроссовки теннисные, размер 41</span>
<span class="t" style="left:398.21px;top:192px;line-height:16px;font-size:14px;color:#000;transform:scaleX(1.0400);">553</span>
<span class="t" style="left:487.06px;top:192px;line-height:16px;font-size:14px;color:#000;transform:scaleX(1.0400);">7 990</span>
<span class="t" style="left:538.73px;top:192px;line-height:16px;font-size:14px;color:#000;transform:scaleX(1.0400);">4 418 470</span>
<span class="t" style="left:31.00px;top:213px;line-height:16px;font-size:14px;color:#000;transform:scaleX(1.0617);">Кроссовки теннисные, размер 42</span>
<span class="t" style="left:398.21px;top:213px;line-height:16px;font-size:14px;color:#000;transform:scaleX(1.0400);">123</span>
<span class="t" style="left:487.06px;top:213px;line-height:16px;font-size:14px;color:#000;transform:scaleX(1.0400);">7 990</span>
<span class="t" style="left:550.87px;top:213px;line-height:16px;font-size:14px;color:#000;transform:scaleX(1.0400);">982 770</span>
<span class="t" style="left:31.00px;top:234px;line-height:16px;font-size:14px;color:#000;transform:scaleX(1.0617);">Кроссовки беговые, размер 42</span>
<span class="t" style="left:398.21px;top:234px;line-height:16px;font-size:14px;color:#000;transform:scaleX(1.0400);">334</span>
<span class="t" style="left:487.06px;top:234px;line-height:16px;font-size:14px;color:#000;transform:scaleX(1.0400);">6 990</span>
<span class="t" style="left:538.73px;top:234px;line-height:16px;font-size:14px;color:#000;transform:scaleX(1.0400);">2 334 660</span>
<span class="t" style="left:31.00px;top:255px;line-height:16px;font-size:14px;color:#000;transform:scaleX(1.0617);">Кроссовки беговые, размер 44</span>
<span class="t" style="left:398.21px;top:255px;line-height:16px;font-size:14px;color:#000;transform:scaleX(1.0400);">222</span>
<span class="t" style="left:487.06px;top:255px;line-height:16px;font-size:14px;color:#000;transform:scaleX(1.0400);">6 990</span>
<span class="t" style="left:538.73px;top:255px;line-height:16px;font-size:14px;color:#000;transform:scaleX(1.0400);">1 551 780</span>
<span class="t" style="left:31.00px;top:276px;line-height:16px;font-size:14px;color:#000;transform:scaleX(1.0617);">Кроссовки беговые, размер 45</span>
<span class="t" style="left:398.21px;top:276px;line-height:16px;font-size:14px;color:#000;transform:scaleX(1.0400);">221</span>
<span class="t" style="left:487.06px;top:276px;line-height:16px;font-size:14px;color:#000;transform:scaleX(1.0400);">6 990</span>
<span class="t" style="left:538.73px;top:276px;line-height:16px;font-size:14px;color:#000;transform:scaleX(1.0400);">1 544 790</span>
<span class="t" style="left:31.00px;top:297px;line-height:16px;font-size:14px;color:#000;transform:scaleX(1.0617);">Кроссовки теннисные, размер 38</span>
<span class="t" style="left:398.21px;top:297px;line-height:16px;font-size:14px;color:#000;transform:scaleX(1.0400);">443</span>
<span class="t" style="left:487.06px;top:297px;line-height:16px;font-size:14px;color:#000;transform:scaleX(1.0400);">7 990</span>
<span class="t" style="left:538.73px;top:297px;line-height:16px;font-size:14px;color:#000;transform:scaleX(1.0400);">3 539 570</span>
<span class="t" style="left:31.00px;top:318px;line-height:16px;font-size:14px;color:#000;transform:scaleX(1.0617);">Кроссовки беговые, размер 35</span>
<span class="t" style="left:398.21px;top:318px;line-height:16px;font-size:14px;color:#000;transform:scaleX(1.0400);">241</span>
<span class="t" style="left:487.06px;top:318px;line-height:16px;font-size:14px;color:#000;transform:scaleX(1.0400);">6 490</span>
<span class="t" style="left:538.73px;top:318px;line-height:16px;font-size:14px;color:#000;transform:scaleX(1.0400);">1 564 090</span>
<span class="t" style="left:31.00px;top:339px;line-height:16px;font-size:14px;color:#000;transform:scaleX(1.0617);">Кроссовки теннисные, размер 43</span>
<span class="t" style="left:398.21px;top:339px;line-height:16px;font-size:14px;color:#000;transform:scaleX(1.0400);">543</span>
<span class="t" style="left:487.06px;top:339px;line-height:16px;font-size:14px;color:#000;transform:scaleX(1.0400);">7 990</span>
<span class="t" style="left:538.73px;top:339px;line-height:16px;font-size:14px;color:#000;transform:scaleX(1.0400);">4 338 570</span>
<span class="t" style="left:31.00px;top:360px;line-height:16px;font-size:14px;color:#000;transform:scaleX(1.0617);">Кроссовки беговые, размер 36</span>
<span class="t" style="left:398.21px;top:360px;line-height:16px;font-size:14px;color:#000;transform:scaleX(1.0400);">332</span>
<span class="t" style="left:487.06px;top:360px;line-height:16px;font-size:14px;color:#000;transform:scaleX(1.0400);">6 490</span>
<span class="t" style="left:538.73px;top:360px;line-height:16px;font-size:14px;color:#000;transform:scaleX(1.0400);">2 154 680</span>
<span class="t" style="left:31.00px;top:381px;line-height:16px;font-size:14px;color:#000;transform:scaleX(1.0617);">Кроссовки беговые, размер 37</span>
<span class="t" style="left:398.21px;top:381px;line-height:16px;font-size:14px;color:#000;transform:scaleX(1.0400);">333</span>
<span class="t" style="left:487.06px;top:381px;line-height:16px;font-size:14px;color:#000;transform:scaleX(1.0400);">6 490</span>
<span class="t" style="left:538.73px;top:381px;line-height:16px;font-size:14px;color:#000;transform:scaleX(1.0400);">2 161 170</span>
<span class="t" style="left:31.00px;top:402px;line-height:16px;font-size:14px;color:#000;transform:scaleX(1.0617);">Кроссовки беговые, размер 38</span>
<span class="t" style="left:398.21px;top:402px;line-height:16px;font-size:14px;color:#000;transform:scaleX(1.0400);">421</span>
<span class="t" style="left:487.06px;top:402px;line-height:16px;font-size:14px;color:#000;transform:scaleX(1.0400);">6 490</span>
<span class="t" style="left:538.73px;top:402px;line-height:16px;font-size:14px;color:#000;transform:scaleX(1.0400);">2 732 290</span>
<span class="t" style="left:31.00px;top:423px;line-height:16px;font-size:14px;color:#000;transform:scaleX(1.0617);">Кроссовки беговые, размер 38</span>
<span class="t" style="left:398.21px;top:423px;line-height:16px;font-size:14px;color:#000;transform:scaleX(1.0400);">220</span>
<span class="t" style="left:487.06px;top:423px;line-height:16px;font-size:14px;color:#000;transform:scaleX(1.0400);">6 990</span>
<span class="t" style="left:538.73px;top:423px;line-height:16px;font-size:14px;color:#000;transform:scaleX(1.0400);">1 537 800</span>
<span class="t" style="left:31.00px;top:444px;line-height:16px;font-size:14px;color:#000;transform:scaleX(1.0617);">Кроссовки теннисные, размер 39</span>
<span class="t" style="left:398.21px;top:444px;line-height:16px;font-size:14px;color:#000;transform:scaleX(1.0400);">554</span>
<span class="t" style="left:487.06px;top:444px;line-height:16px;font-size:14px;color:#000;transform:scaleX(1.0400);">7 990</span>
<span class="t" style="left:538.73px;top:444px;line-height:16px;font-size:14px;color:#000;transform:scaleX(1.0400);">4 426 460</span>
<span class="t" style="left:31.00px;top:465px;line-height:16px;font-size:14px;color:#000;transform:scaleX(1.0617);">Кроссовки беговые, размер 35</span>
<span class="t" style="left:398.21px;top:465px;line-height:16px;font-size:14px;color:#000;transform:scaleX(1.0400);">125</span>
<span class="t" style="left:487.06px;top:465px;line-height:16px;font-size:14px;color:#000;transform:scaleX(1.0400);">3 990</span>
<span class="t" style="left:550.87px;top:465px;line-height:16px;font-size:14px;color:#000;transform:scaleX(1.0400);">498 750</span>
</div>
<svg class="r" style="left:20px;top:195px" width="420" height="40" viewBox="20 195 420 40"><rect x="26.45" y="201.45" width="404.1" height="26.8" rx="7.5" ry="7.5" fill="none" stroke="#ff0000" stroke-width="3.3"/></svg>
<div class="r" style="left:1052px;top:206px;width:15px;height:15px;background:#fff;border:1px solid #ababab;"></div>
<div class="r" style="left:1052px;top:221px;width:15px;height:273px;background:#fff;border:1px solid #ababab;"></div>
<div class="r" style="left:1052px;top:494px;width:15px;height:169px;background:#dadada;"></div>
<div class="r" style="left:1052px;top:663px;width:15px;height:15px;background:#fff;border:1px solid #ababab;"></div>
<svg class="r" style="left:1055px;top:211px" width="9" height="5" viewBox="0 0 9 5"><path d="M0 5L4.5 0L9 5Z" fill="#777"/></svg>
<svg class="r" style="left:1055px;top:668px" width="9" height="5" viewBox="0 0 9 5"><path d="M0 0H9L4.5 5Z" fill="#777"/></svg>
<div class="r" style="left:0px;top:677px;width:1071px;height:28px;background:#e6e6e6;"></div>
<div class="r" style="left:1px;top:677px;width:1048px;height:1px;background:#b4b4b4;"></div>
<div class="r" style="left:0px;top:705px;width:1071px;height:1px;background:#c6c6c6;"></div>
<div class="r" style="left:0px;top:706px;width:1071px;height:20px;background:#f3f3f3;"></div>
<div class="r" style="left:101px;top:677px;width:107px;height:25px;background:#fff;border-left:1px solid #b4b4b4;border-right:1px solid #b4b4b4;"></div>
<div class="r" style="left:101px;top:700px;width:107px;height:2px;background:#01743f;"></div>
<span class="t" style="left:113.50px;top:683px;line-height:15px;font-size:13.3px;color:#01743f;transform:scaleX(0.9515);font-weight:700;">microexcel.ru</span>
<div class="r" style="left:770px;top:706px;width:38px;height:20px;background:#c6c6c6;"></div>
<div class="r" style="left:659px;top:684px;width:15px;height:15px;background:#fff;border:1px solid #ababab;"></div>
<div class="r" style="left:674px;top:684px;width:330px;height:15px;background:#fff;border:1px solid #ababab;"></div>
<div class="r" style="left:1004px;top:684px;width:30px;height:15px;background:#dadada;"></div>
<div class="r" style="left:1036px;top:684px;width:15px;height:15px;background:#fff;border:1px solid #ababab;"></div>
<svg class="r" style="left:0;top:677px" width="1071" height="51" viewBox="0 677 1071 51"><path d="M32 687.4V694.2L27.8 690.8Z" fill="#c4c4c4"/><path d="M57.2 687.4V694.2L61 690.8Z" fill="#c4c4c4"/><circle cx="249" cy="690.6" r="7.6" fill="none" stroke="#777" stroke-width="1.2"/><path d="M245 690.6H253M249 686.6V694.6" stroke="#777" stroke-width="1.4"/><path d="M10.5 715.5V721.3H21.5V711" fill="#fbfbfb" stroke="#555" stroke-width="1.2"/><rect x="16.2" y="710" width="5.9" height="2.5" fill="#555"/><circle cx="11.9" cy="711.9" r="3" fill="#555"/><rect x="15.1" y="714.9" width="1.7" height="0.9" fill="#555"/><rect x="18.1" y="714.9" width="1.7" height="0.9" fill="#555"/><rect x="12.1" y="717.1" width="1.7" height="0.9" fill="#555"/><rect x="15.1" y="717.1" width="1.7" height="0.9" fill="#555"/><rect x="18.1" y="717.1" width="1.7" height="0.9" fill="#555"/><rect x="12.1" y="719.1" width="1.7" height="0.9" fill="#555"/><rect x="15.1" y="719.1" width="1.7" height="0.9" fill="#555"/><rect x="18.1" y="719.1" width="1.7" height="0.9" fill="#555"/><rect x="642.4" y="685.2" width="1.6" height="1.6" fill="#a3a3a3"/><rect x="642.4" y="689.6" width="1.6" height="1.6" fill="#a3a3a3"/><rect x="642.4" y="694" width="1.6" height="1.6" fill="#a3a3a3"/><path d="M667.8 687.6V694.4L663.6 691Z" fill="#666"/><path d="M1041.4 687.6V694.4L1045.6 691Z" fill="#666"/><path d="M782.5 709.5H794.5V721.5H782.5ZM782.5 713.5H794.5M782.5 717.5H794.5M786.5 709.5V721.5M790.5 709.5V721.5" fill="none" stroke="#666" stroke-width="1"/><path d="M821.5 709.5H833.5V721.5H821.5Z" fill="none" stroke="#666" stroke-width="1"/><path d="M824.5 712.5H830.5V718.5H824.5ZM824.5 714.5H830.5M824.5 716.5H830.5" fill="none" stroke="#666" stroke-width="0.9"/><path d="M858.5 709.5H871.5V721.5H858.5ZM862.5 709.5V715.5H867.5V709.5" fill="none" stroke="#666" stroke-width="1"/><path d="M889.4 715.8H894.2" stroke="#555" stroke-width="1.6"/><path d="M899 715.5H998.5" stroke="#9a9a9a" stroke-width="1"/><rect x="947" y="710" width="4.6" height="11" fill="#666"/><path d="M1002.4 715.8H1008.4M1005.4 712.8V718.8" stroke="#555" stroke-width="1.6"/></svg>
<span class="t" style="left:672.00px;top:709px;line-height:12px;font-size:10.8px;color:#444;transform:scaleX(1.0459);">Количество: 68</span>
<span class="t" style="left:1022.00px;top:709px;line-height:12px;font-size:10.8px;color:#444;transform:scaleX(0.9405);">100 %</span>
<div class="r" style="left:0px;top:0px;width:1px;height:728px;background:#01743f;"></div>
<div class="r" style="left:1070px;top:0px;width:1px;height:728px;background:#01743f;"></div>
<div class="r" style="left:1069px;top:0px;width:1px;height:728px;background:rgba(1,116,63,0.3);"></div>
<div class="r" style="left:0px;top:727px;width:1071px;height:1px;background:#01743f;"></div>
<div class="r" style="left:0px;top:726px;width:1071px;height:1px;background:rgba(1,116,63,0.3);"></div>
</body></html>
